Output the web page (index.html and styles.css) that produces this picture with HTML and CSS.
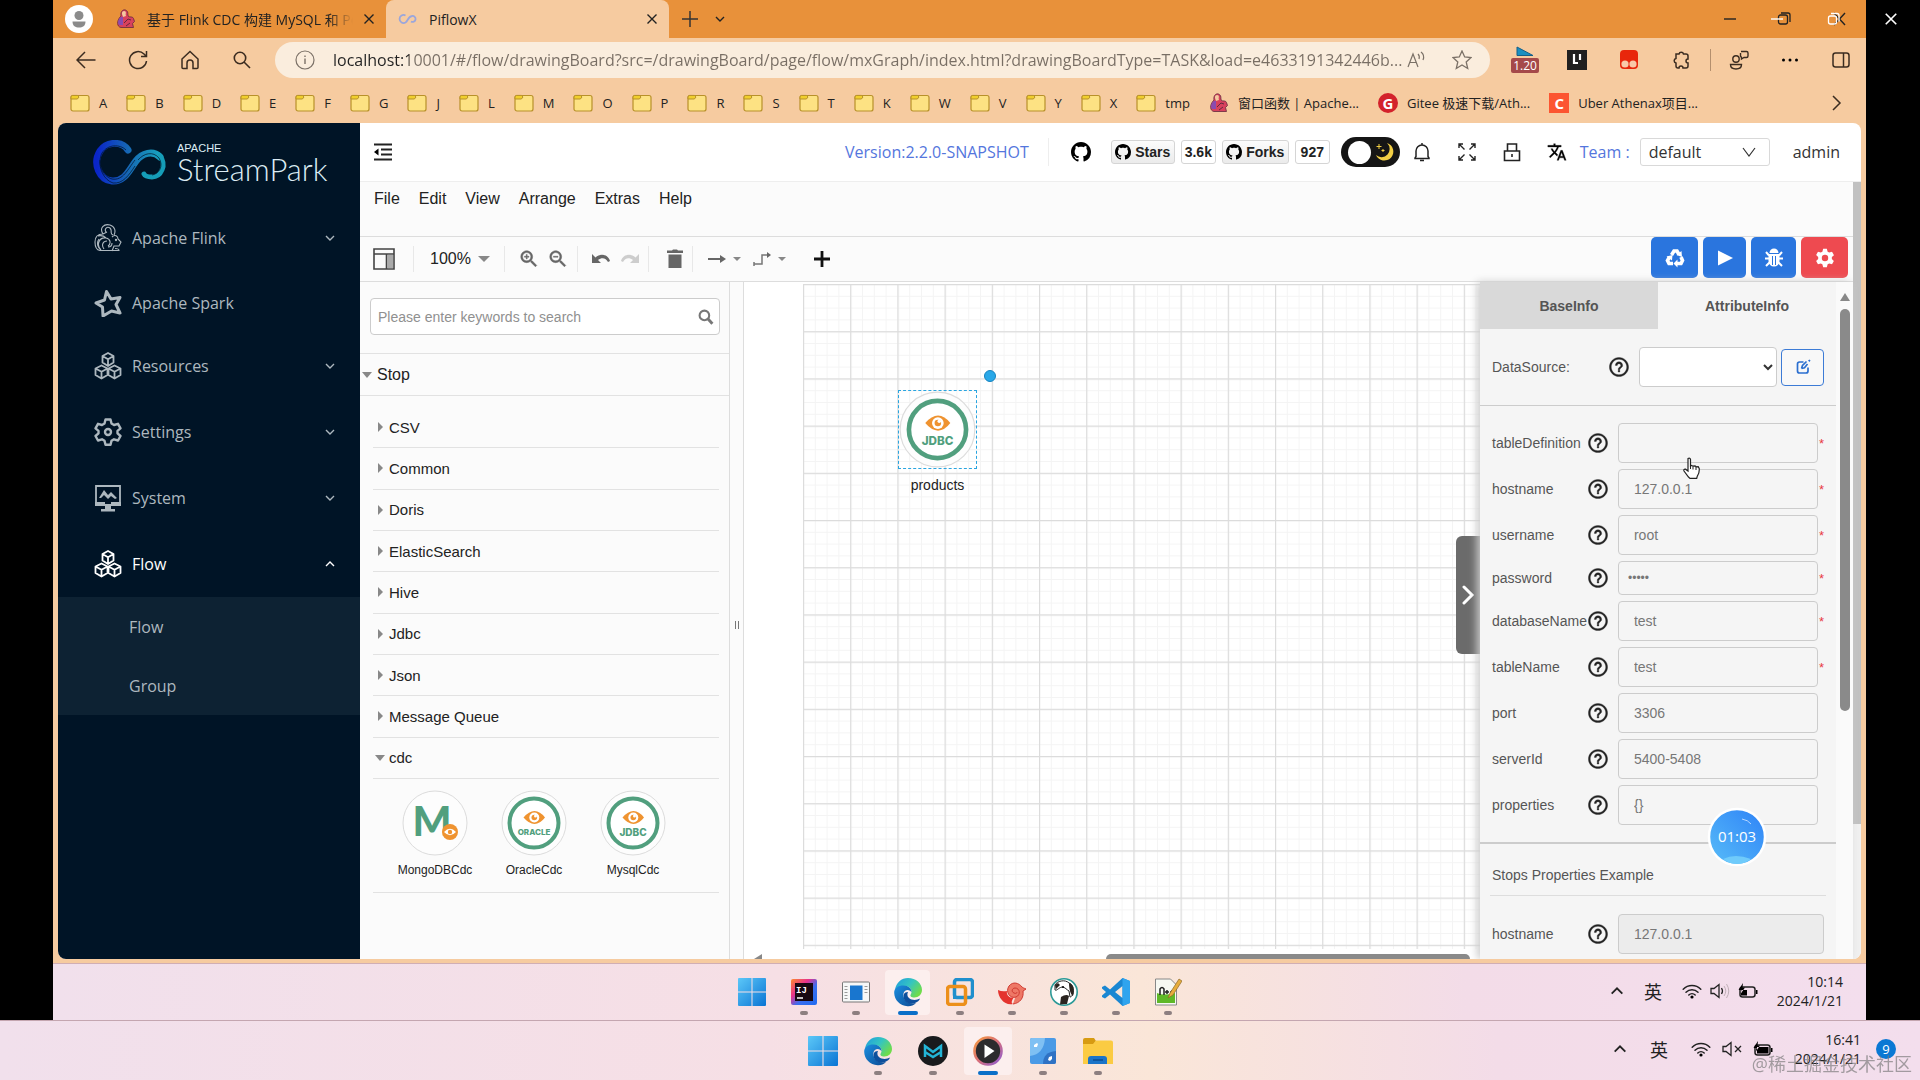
FILE: index.html
```html
<!DOCTYPE html>
<html lang="zh-CN">
<head>
<meta charset="utf-8">
<title>PiflowX</title>
<link rel="stylesheet" href="styles.css">
</head>
<body>
<svg class="defs" aria-hidden="true">
  <defs>
    <linearGradient id="gWin" x1="0" y1="0" x2="1" y2="1"><stop offset="0" stop-color="#5cc8f8"/><stop offset="1" stop-color="#0a74d4"/></linearGradient>
    <linearGradient id="gEdgeG" x1="0" y1="0" x2="1" y2="0.6"><stop offset="0" stop-color="#1e9be0"/><stop offset="0.55" stop-color="#35c5c0"/><stop offset="1" stop-color="#6fdc4a"/></linearGradient>
    <linearGradient id="gEdgeB" x1="0" y1="0" x2="1" y2="1"><stop offset="0" stop-color="#1b8fe0"/><stop offset="1" stop-color="#0b4a94"/></linearGradient>
    <linearGradient id="gLogo" x1="0" y1="0" x2="1" y2="0"><stop offset="0" stop-color="#0a25c8"/><stop offset="0.5" stop-color="#1668b4"/><stop offset="1" stop-color="#18a3bf"/></linearGradient>
    <linearGradient id="gIj" x1="0" y1="0" x2="1" y2="1"><stop offset="0" stop-color="#fe8b2e"/><stop offset="0.35" stop-color="#e8308c"/><stop offset="0.6" stop-color="#3b6ef0"/><stop offset="1" stop-color="#1f6cf0"/></linearGradient>
    <linearGradient id="gMedia" x1="0" y1="0" x2="1" y2="1"><stop offset="0" stop-color="#f79a3c"/><stop offset="0.5" stop-color="#d9707a"/><stop offset="1" stop-color="#8b5bd6"/></linearGradient>
    <pattern id="minor" width="11.8" height="11.8" patternUnits="userSpaceOnUse"><path d="M0 .5H12M.5 0V12" stroke="#f4f4f4" stroke-width="1" fill="none"/></pattern>
    <pattern id="major" width="47.2" height="47.2" patternUnits="userSpaceOnUse"><path d="M0 .6H48M.6 0V48" stroke="#dcdcdc" stroke-width="1.2" fill="none"/></pattern>
  </defs>
  <symbol id="folder" viewBox="0 0 20 18"><rect x="1" y="1.5" width="18" height="15.5" rx="2" fill="#fde283" stroke="#b8912a" stroke-width="1.2"/><path d="M1 5V3a1.6 1.6 0 0 1 1.6-1.6H7.5L9 3 7.4 5Z" fill="#f0cf2c" stroke="#b8912a"/></symbol>
  <symbol id="squirrel" viewBox="0 0 20 20"><path d="M5 7C4 2 8-.5 10.5 1.600 13 3.500 11 5.500 12.500 7.500 14 8.500 16.500 7 17.500 9.500l1 3-2 2 1 4H5C1 18 0 12 5 7Z" fill="#d8415d" stroke="#63283e" stroke-width=".8"/><path d="M6 5C5.500 2.500 8 1 9.500 2.500c1 1.500-.5 2.500.5 4.500L7 8Z" fill="#f4c9a0"/><path d="M3 10c1-2 3-2.500 4-2v8H3C1.500 14 2 12 3 10Z" fill="#8a4bb0"/><path d="m8 14 4-4 3 1M10 17l4-3" stroke="#63283e" fill="none"/></symbol>
  <symbol id="github" viewBox="0 0 16 16"><path d="M8 0C3.58 0 0 3.58 0 8c0 3.540 2.290 6.530 5.470 7.590.4.070.55-.17.55-.38 0-.19-.01-.82-.01-1.490-2.010.37-2.530-.49-2.690-.94-.09-.23-.48-.94-.82-1.130-.28-.15-.68-.52-.01-.53.63-.01 1.080.58 1.230.82.72 1.210 1.870.87 2.330.66.070-.52.28-.87.51-1.070-1.780-.2-3.640-.89-3.640-3.950 0-.87.31-1.590.82-2.150-.08-.2-.36-1.020.080-2.120 0 0 .67-.21 2.200.82.64-.18 1.320-.27 2-.27.68 0 1.360.090 2 .27 1.530-1.040 2.200-.82 2.200-.82.44 1.100.16 1.920.080 2.120.51.56.82 1.270.82 2.150 0 3.070-1.870 3.750-3.650 3.950.29.25.54.73.54 1.480 0 1.070-.01 1.930-.01 2.200 0 .21.15.46.55.38A8.013 8.013 0 0 0 16 8c0-4.420-3.580-8-8-8z"/></symbol>
  <symbol id="help" viewBox="0 0 24 24"><path d="M11 18h2v-2h-2v2zm1-17.500C5.700.5.500 5.700.5 12S5.700 23.500 12 23.500 23.500 18.300 23.500 12 18.300.5 12 .5zm0 20.800c-5.100 0-9.300-4.200-9.300-9.300S6.900 2.700 12 2.700s9.300 4.200 9.300 9.300-4.200 9.300-9.300 9.300zm0-15.600c-2.430 0-4.400 1.970-4.400 4.400h2.300c0-1.160.94-2.100 2.100-2.100s2.100.94 2.100 2.100c0 2-3.200 1.750-3.200 5.200h2.200c0-2.250 3.300-2.600 3.300-5.200 0-2.430-1.970-4.400-4.400-4.400z" stroke="currentColor" stroke-width=".4"/></symbol>
  <symbol id="down" viewBox="0 0 12 12"><path d="m2 4 4 4 4-4" fill="none" stroke="currentColor" stroke-width="1.400"/></symbol>
  <symbol id="up" viewBox="0 0 12 12"><path d="m2 8 4-4 4 4" fill="none" stroke="currentColor" stroke-width="1.400"/></symbol>
  <symbol id="close" viewBox="0 0 12 12"><path d="m1.500 1.500 9 9m0-9-9 9" fill="none" stroke="currentColor" stroke-width="1.400"/></symbol>
  <symbol id="cubes" viewBox="0 0 28 28"><g fill="none" stroke="currentColor" stroke-width="1.800" stroke-linejoin="round"><path d="m14 1 5.500 3v6.500L14 14l-5.500-3.500V4ZM8.500 4 14 7.300 19.500 4M14 7.300V14"/><path d="m7.500 13.500 6 3v6.500L7.500 26.500 1.500 23v-6.500Zm-6 3 6 3.300 6-3.300m-6 3.300v6.500M20.500 13.500l6 3v6.500l-6 3.500-6-3.500v-6.500Zm-6 3 6 3.300 6-3.300m-6 3.300v6.500"/></g></symbol>
  <symbol id="edge" viewBox="0 0 30 30"><path d="M2 13C3 5.500 8.500 1 15 1c8 0 14 5.500 14 12 0 4.500-3.500 7.500-7.500 7.500-3.500 0-5-1.500-3.500-3.500 2-3-1-8-6-8-5 0-9 2-10 4Z" fill="url(#gEdgeG)"/><path d="M1.200 16C1 11 5 8.500 10.500 8.500c5 0 8.500 3.500 8 7-.5-1.500-2-2.500-4-2.500-3.500 0-5 4-3.500 8 1.500 4 6 6.500 12 5-2.500 2.500-5.500 3.500-8.500 3.200C7 28.800 1.400 23 1.200 16Z" fill="url(#gEdgeB)"/><path d="M11 17c-2 5 3 12 11 9 3-1 4.500-3 5-4.500-3 1.800-8 2.200-11-.5-2-1.700-2-4-1-6-2 0-3.500.8-4 2Z" fill="#0d4f9c"/></symbol>
  <symbol id="windows" viewBox="0 0 28 28"><path d="M1 0h12.500v13.500H0V1a1 1 0 0 1 1-1Zm13.500 0H27a1 1 0 0 1 1 1v12.500H14.500ZM0 14.500h13.500V28H1a1 1 0 0 1-1-1Zm14.500 0H28V27a1 1 0 0 1-1 1H14.500Z" fill="url(#gWin)"/></symbol>
  <symbol id="wifi" viewBox="0 0 20 16"><g fill="none" stroke="currentColor" stroke-width="1.500" stroke-linecap="round"><path d="M1.200 6.200a12.500 12.500 0 0 1 17.600 0M4 9.200a8.500 8.500 0 0 1 12 0M6.800 12a4.600 4.600 0 0 1 6.400 0"/></g><circle cx="10" cy="14" r="1.600"/></symbol>
  <symbol id="battery" viewBox="0 0 20 16"><rect x="2" y="4" width="15" height="10" rx="2.500" fill="none" stroke="currentColor" stroke-width="1.500"/><path d="M18 7v4h1.500V7ZM3 7h6v5.500H3ZM5 0 .5 7H3.500L2.500 11 7 4.500H4.500Z"/></symbol>
  <symbol id="battfull" viewBox="0 0 20 16"><rect x="2" y="4" width="15" height="10" rx="2.500" fill="none" stroke="currentColor" stroke-width="1.500"/><path d="M18 7v4h1.500V7ZM4 6h11.500v6.500H4ZM5 0 .5 7H3.500L2.500 11 7 4.500H4.500Z"/></symbol>
  <symbol id="jdbc" viewBox="0 0 66 66"><circle cx="33" cy="33" r="32" fill="#fdfdfd" stroke="#dcdcdc"/><circle cx="33" cy="33" r="24.500" fill="#fff" stroke="#519f7e" stroke-width="4"/><path d="M22.500 27.500Q28 21 33.500 21T44 27.500Q39 34 33.500 34T22.500 27.500Z" fill="#ef9330"/><circle cx="33.300" cy="27.500" r="5" fill="#fff"/><circle cx="33.300" cy="27.500" r="2.800" fill="#ef9330"/><circle cx="34.500" cy="26" r="1.500" fill="#fff"/><text x="33" y="46" text-anchor="middle" class="badge-text">JDBC</text></symbol>
</svg>

<div class="screen">
  <div class="desktop">
    <div class="browser">
      <div class="tabstrip">
        <svg class="avatar" viewBox="0 0 28 28"><circle cx="14" cy="14" r="14" fill="#fff"/><circle cx="14" cy="10.500" r="4.500" fill="#8b8b8b"/><path d="M7.500 16.500h13c0 4.500-3 6-6.500 6s-6.500-1.500-6.500-6Z" fill="#8b8b8b"/></svg>
        <div class="tab"><svg class="i20"><use href="#squirrel"/></svg><span class="tab-title fade">基于 Flink CDC 构建 MySQL 和 Po</span><button aria-label="Close tab"><svg class="i12"><use href="#close"/></svg></button></div>
        <div class="tab active"><svg class="i20" viewBox="0 0 20 20"><path d="M7.500 6.500a4 4 0 1 0 0 7C10 12 10 7.500 14 7a3 3 0 1 1-1 5.500" fill="none" stroke="#9aa6dc" stroke-width="1.800"/></svg><span class="tab-title">PiflowX</span><button aria-label="Close tab"><svg class="i12"><use href="#close"/></svg></button></div>
        <button class="strip-btn" aria-label="New tab"><svg class="i16" viewBox="0 0 16 16"><path d="M8 0v16M0 8h16" stroke="#333" stroke-width="1.500"/></svg></button>
        <button class="strip-btn" aria-label="Tab list"><svg class="i12"><use href="#down"/></svg></button>
        <div class="wincontrols">
          <svg class="win-icon" viewBox="0 0 24 20"><path d="M6 10h12" stroke="#222" stroke-width="1.400"/></svg>
          <svg class="win-icon" viewBox="0 0 24 20"><rect x="7.500" y="6" width="9" height="9" rx="2" fill="none" stroke="#222" stroke-width="1.300"/><path d="M10 4h7a2 2 0 0 1 2 2v7" fill="none" stroke="#222" stroke-width="1.300"/><path d="M0 10h12" stroke="#fff" stroke-width="1.400"/></svg>
          <svg class="win-icon" viewBox="0 0 24 20"><path d="m10 4 11 12m0-12L10 16" stroke="#222" stroke-width="1.400"/><rect x="4.500" y="7" width="8" height="8" rx="2" fill="none" stroke="#fff" stroke-width="1.300"/><path d="M7 4.500h6a2 2 0 0 1 2 2v6" fill="none" stroke="#fff" stroke-width="1.300"/></svg>
        </div>
      </div>

      <div class="toolbar">
        <button class="nav" aria-label="Back"><svg class="i20" viewBox="0 0 20 20"><path d="M19.500 10H1.500M9 2 1 10l8 8" fill="none" stroke="#3b2c20" stroke-width="1.500"/></svg></button>
        <button class="nav" aria-label="Refresh"><svg class="i20" viewBox="0 0 20 20"><path d="M18.500 11a8.500 8.500 0 1 1-2.500-7l2 2M18.500 1v5.500H13" fill="none" stroke="#3b2c20" stroke-width="1.500"/></svg></button>
        <button class="nav" aria-label="Home"><svg class="i20" viewBox="0 0 20 20"><path d="M2 9 10 1.500 18 9v8.500a1 1 0 0 1-1 1h-4V13a3 3 0 0 0-6 0v5.500H3a1 1 0 0 1-1-1Z" fill="none" stroke="#3b2c20" stroke-width="1.500"/></svg></button>
        <button class="nav" aria-label="Search"><svg class="i20" viewBox="0 0 20 20"><circle cx="8" cy="8" r="5.700" fill="none" stroke="#3b2c20" stroke-width="1.600"/><path d="m12 12 6 6" stroke="#3b2c20" stroke-width="1.600"/></svg></button>
        <div class="address">
          <svg class="i20" viewBox="0 0 20 20"><circle cx="10" cy="10" r="9" fill="none" stroke="#7b7167" stroke-width="1.200"/><path d="M10 8.500V14M10 5.500V7" stroke="#7b7167" stroke-width="1.400"/></svg>
          <input aria-label="Address" value="localhost:10001/#/flow/drawingBoard?src=/drawingBoard/page/flow/mxGraph/index.html?drawingBoardType=TASK&amp;load=e4633191342446b...">
          <svg class="i20" viewBox="0 0 20 20"><path d="M2 17 7 4l5 13M4 12.500h6M12 4q2 2 1 5M15 2q4 3 2 8" fill="none" stroke="#7b7167" stroke-width="1.200"/></svg>
          <svg class="i20 star" viewBox="0 0 20 20"><path d="m10 1 2.700 6 6.300.6-4.800 4.300 1.500 6.600L10 15l-5.700 3.500 1.500-6.600L1 7.600 7.300 7Z" fill="none" stroke="#7b7167" stroke-width="1.300"/></svg>
        </div>
        <button class="nav" aria-label="Player speed"><svg class="i28" viewBox="0 0 28 28"><path d="M6 1 22 9.500H6Z" fill="#1b8fc0" stroke="#155f88"/><rect y="12" width="28" height="15" rx="2" fill="#a5494a"/><text x="14" y="24" text-anchor="middle" class="speed">1.20</text></svg></button>
        <button class="nav" aria-label="Reader"><svg class="i20" viewBox="0 0 20 20"><path d="M0 0h20v20H0Z" fill="#202020"/><path d="M7 4v9h4M13 4v6" stroke="#fff" stroke-width="2.200" fill="none"/></svg></button>
        <button class="nav" aria-label="Tampermonkey"><svg class="i20" viewBox="0 0 20 20"><rect x="1" y="0" width="18" height="19" rx="4" fill="#e8270c"/><circle cx="6" cy="14" r="3.600" fill="#f9c8a8"/><circle cx="14" cy="14" r="3.600" fill="#f9c8a8"/></svg></button>
        <button class="nav" aria-label="Extensions"><svg class="i20" viewBox="0 0 20 20"><path d="M5 4h3a2.300 2.300 0 0 1 4.500 0H15a2 2 0 0 1 2 2v3a2 2 0 0 0 0 4v3a2 2 0 0 1-2 2h-3a2 2 0 0 0-4 0H7a2 2 0 0 1-2-2v-3a2.300 2.300 0 0 1 0-4.500Z" fill="none" stroke="#3b2c20" stroke-width="1.500"/></svg></button>
        <span class="vline"></span>
        <button class="nav" aria-label="Share"><svg class="i20" viewBox="0 0 20 20"><circle cx="7" cy="9" r="3.200" fill="none" stroke="#3b2c20" stroke-width="1.400"/><path d="M1.500 14.500h11c0 3-2 4.500-5.500 4.500s-5.500-1.500-5.500-4.500ZM12 1.500h5.500a1.500 1.500 0 0 1 1.500 1.500v3A1.500 1.500 0 0 1 17.500 7.500H15L12.500 9V7.500L11.500 6V3" fill="none" stroke="#3b2c20" stroke-width="1.400"/></svg></button>
        <button class="nav" aria-label="More"><svg class="i20" viewBox="0 0 20 20"><circle cx="3.500" cy="10" r="1.500"/><circle cx="10" cy="10" r="1.500"/><circle cx="16.500" cy="10" r="1.500"/></svg></button>
        <button class="nav" aria-label="Sidebar"><svg class="i20" viewBox="0 0 20 20"><rect x="2" y="3" width="16" height="14" rx="2.500" fill="none" stroke="#3b2c20" stroke-width="1.500"/><path d="M12.500 3v14" stroke="#3b2c20" stroke-width="1.500"/></svg></button>
      </div>

      <nav class="bookmarks">
        <a href="#"><svg class="i20"><use href="#folder"/></svg>A</a><a href="#"><svg class="i20"><use href="#folder"/></svg>B</a><a href="#"><svg class="i20"><use href="#folder"/></svg>D</a><a href="#"><svg class="i20"><use href="#folder"/></svg>E</a><a href="#"><svg class="i20"><use href="#folder"/></svg>F</a><a href="#"><svg class="i20"><use href="#folder"/></svg>G</a><a href="#"><svg class="i20"><use href="#folder"/></svg>J</a><a href="#"><svg class="i20"><use href="#folder"/></svg>L</a><a href="#"><svg class="i20"><use href="#folder"/></svg>M</a><a href="#"><svg class="i20"><use href="#folder"/></svg>O</a><a href="#"><svg class="i20"><use href="#folder"/></svg>P</a><a href="#"><svg class="i20"><use href="#folder"/></svg>R</a><a href="#"><svg class="i20"><use href="#folder"/></svg>S</a><a href="#"><svg class="i20"><use href="#folder"/></svg>T</a><a href="#"><svg class="i20"><use href="#folder"/></svg>K</a><a href="#"><svg class="i20"><use href="#folder"/></svg>W</a><a href="#"><svg class="i20"><use href="#folder"/></svg>V</a><a href="#"><svg class="i20"><use href="#folder"/></svg>Y</a><a href="#"><svg class="i20"><use href="#folder"/></svg>X</a><a href="#"><svg class="i20"><use href="#folder"/></svg>tmp</a>
        <a href="#"><svg class="i20"><use href="#squirrel"/></svg>窗口函数 | Apache...</a>
        <a href="#"><span class="fav gitee">G</span>Gitee 极速下载/Ath...</a>
        <a href="#"><span class="fav csdn">C</span>Uber Athenax项目...</a>
        <button aria-label="More bookmarks"><svg class="i16" viewBox="0 0 16 16"><path d="m5 1 7 7-7 7" fill="none" stroke="#3b2c20" stroke-width="1.500"/></svg></button>
      </nav>

      <div class="app">
        <aside class="sidebar">
          <div class="logo">
            <svg class="logo-mark" viewBox="0 0 76 46"><g fill="none" stroke="url(#gLogo)" stroke-linecap="round"><path d="M36 10C30 1 15 1 8 11 0 24 8 40 20 41c13 1 17-11 24-20 6-8 17-11 24-4" stroke-width="7"/><path d="M68 16c7 9 1 21-8 21-4 0-7-1-8-3" stroke-width="5" stroke="#159db8"/></g><g fill="none" stroke="#001426" stroke-width=".7"><path d="M34 10C28 4 16 4 10 13 5 23 10 36 20 39c11 2 16-10 23-19M46 20c6-7 15-9 21-2 5 8 0 16-7 17M8 20c-1 9 4 20 13 23 10 1 16-8 22-17"/></g></svg>
            <div><span class="logo-top">APACHE</span><span class="logo-name">StreamPark</span></div>
          </div>
          <ul class="menu">
            <li><a href="#"><svg class="i28" viewBox="0 0 28 28"><g fill="none" stroke="currentColor" stroke-width="1.100"><path d="M9 10C5 4 10-.5 16 1c5 1.500 6 6 4 10M12 8c-2-3 1-6 4-4 3 3-1 5 3 7M1 18c0-5 3-8 8-8l4-2M1 18c0 5 2 8 5 8.500h19c0-2-3-2-4-2M7 26c-5-5-2-13 5-12 5 1 5 6 2 8M10 25c-3-4-1-8 3-8M18 13c3-3 6-1 6 2l3 3-2 4h-5l-2 5M4 12c4-1 6 0 8 2M5 15c-3 4-1 9 2 11M14 23c3 0 4-2 4-4"/><circle cx="22" cy="16" r=".6"/></g></svg>Apache Flink<svg class="i12 chev"><use href="#down"/></svg></a></li>
            <li><a href="#"><svg class="i28" viewBox="0 0 28 28"><path class="hollow" d="M12.500 2.500 17 10l9-1.500-4 7 4 8.500-8.500-2L9 27l-.5-9L2 14l8.500-3Z" fill="none" stroke="currentColor" stroke-width="3" stroke-linejoin="round"/></svg>Apache Spark</a></li>
            <li><a href="#"><svg class="i28"><use href="#cubes"/></svg>Resources<svg class="i12 chev"><use href="#down"/></svg></a></li>
            <li><a href="#"><svg class="i28" viewBox="0 0 28 28"><path d="M11.500 1.500h5l1 4 2.500 1.500 4-1.200 2.500 4.500-3 2.500v2.500l3 2.700-2.500 4.500-4-1.200-2.500 1.500-1 4h-5l-1-4L8 21.300l-4 1.200L1.500 18l3-2.700v-2.500l-3-2.500L4 5.800 8 7l2.500-1.500Z" fill="none" stroke="currentColor" stroke-width="2.400" stroke-linejoin="round"/><circle cx="14" cy="14" r="3" fill="none" stroke="currentColor" stroke-width="2.400"/></svg>Settings<svg class="i12 chev"><use href="#down"/></svg></a></li>
            <li><a href="#"><svg class="i28" viewBox="0 0 28 28"><path d="M2 19V2h24v17" fill="none" stroke="currentColor" stroke-width="1.800"/><path d="m5 14 5-8 4 5 3-3 6 6-2 1-4-3-3 3-4-4-3 3Z"/><path d="M1 18h10v2h6v-2h10v4H17v3h4v2.500H7V25h4v-3H1Z"/></svg>System<svg class="i12 chev"><use href="#down"/></svg></a></li>
            <li class="open"><a href="#"><svg class="i28"><use href="#cubes"/></svg>Flow<svg class="i12 chev"><use href="#up"/></svg></a></li>
          </ul>
          <ul class="submenu"><li><a href="#">Flow</a></li><li><a href="#">Group</a></li></ul>
        </aside>

        <main class="main">
          <header class="header">
            <button aria-label="Fold menu"><svg class="i18" viewBox="0 0 18 18"><path d="M0 1.500h18M7 6.500h11M7 11.500h11M0 16.500h18" stroke="#222" stroke-width="1.800"/><path d="M4.500 5.500v7L0 9Z"/></svg></button>
            <div class="header-right">
              <span class="version">Version:2.2.0-SNAPSHOT</span>
              <svg class="i20 gh"><use href="#github"/></svg>
              <a href="#" class="gh-btn w64"><svg class="i16"><use href="#github"/></svg>Stars</a><a href="#" class="gh-count">3.6k</a>
              <a href="#" class="gh-btn w67"><svg class="i16"><use href="#github"/></svg>Forks</a><a href="#" class="gh-count">927</a>
              <button class="toggle" aria-label="Dark mode"><span class="knob"></span><svg class="i20" viewBox="0 0 20 20"><path d="M12 1a9 9 0 1 1-11 12 8 8 0 0 0 11-12Z" fill="#f2cf45"/><path d="M4 2v5M1.500 4.500h5M8 7v3M6.500 8.500h3" stroke="#f2cf45"/></svg></button>
              <button class="cell" aria-label="Notifications"><svg class="i20" viewBox="0 0 20 20"><path d="M3 16.500V16l1-1.500V9a6 6 0 0 1 12 0v5.500l1 1.500v.5ZM8 18.500h4M10 1v2" fill="none" stroke="#222" stroke-width="1.500"/></svg></button>
              <button class="cell" aria-label="Fullscreen"><svg class="i18" viewBox="0 0 18 18"><path d="M6.500 6.500 1 1m0 4V1h4M11.500 6.500 17 1m-4 0h4v4M6.500 11.500 1 17m0-4v4h4M11.500 11.500 17 17m0-4v4h-4" fill="none" stroke="#222" stroke-width="1.400"/></svg></button>
              <button class="cell" aria-label="Lock"><svg class="i20" viewBox="0 0 20 20"><path d="M2.500 9h15v9.500h-15ZM5.500 9V2h9v7M10 12v3" fill="none" stroke="#222" stroke-width="1.600"/></svg></button>
              <button class="cell" aria-label="Language"><svg class="i20" viewBox="0 0 24 24"><path d="M12.870 15.070l-2.540-2.510.03-.03c1.740-1.940 2.980-4.170 3.710-6.530H17V4h-7V2H8v2H1v1.990h11.170C11.500 7.920 10.440 9.750 9 11.350 8.070 10.320 7.300 9.190 6.690 8h-2c.73 1.630 1.730 3.170 2.980 4.560l-5.090 5.020L4 19l5-5 3.110 3.110.76-2.040zM18.500 10h-2L12 22h2l1.120-3h4.750L21 22h2l-4.500-12zm-2.620 7l1.620-4.330L19.120 17h-3.240z" stroke="#222" stroke-width=".4"/></svg></button>
              <label class="team" for="team">Team :</label>
              <span class="team-box"><select id="team"><option>default</option></select><svg class="i16" viewBox="0 0 16 16"><path d="m2 4 6 8 6-8" fill="none" stroke="#333" stroke-width="1.200"/></svg></span>
              <span class="user">admin</span>
            </div>
          </header>

          <div class="content">
            <div class="editor">
              <nav class="menubar"><a href="#">File</a><a href="#">Edit</a><a href="#">View</a><a href="#">Arrange</a><a href="#">Extras</a><a href="#">Help</a></nav>
              <div class="tools">
                <div class="tool-group first"><svg class="i22" viewBox="0 0 22 22"><path d="M1 1h20v20H1ZM1 6h20M13.500 6v15" fill="none" stroke="#444" stroke-width="1.600"/><path d="M14 7h6v13h-6Z" fill="#aaa"/></svg></div>
                <div class="tool-group zoomlevel">100%<i class="caret"></i></div>
                <div class="tool-group g73"><svg class="i22" viewBox="0 0 24 24"><path d="M15.500 14h-.79l-.28-.27C15.410 12.590 16 11.110 16 9.500 16 5.910 13.090 3 9.500 3S3 5.910 3 9.500 5.910 16 9.500 16c1.610 0 3.090-.59 4.230-1.570l.27.28v.79l5 4.990L20.490 19l-4.990-5zm-6 0C7.010 14 5 11.990 5 9.500S7.010 5 9.500 5 14 7.010 14 9.500 11.990 14 9.500 14zM12 10h-2v2H9v-2H7V9h2V7h1v2h2v1z" stroke="#666" stroke-width=".5"/></svg><svg class="i22" viewBox="0 0 24 24"><path d="M15.500 14h-.79l-.28-.27C15.410 12.590 16 11.110 16 9.500 16 5.910 13.090 3 9.500 3S3 5.910 3 9.500 5.910 16 9.500 16c1.610 0 3.090-.59 4.230-1.570l.27.28v.79l5 4.990L20.490 19l-4.990-5zm-6 0C7.010 14 5 11.990 5 9.500S7.010 5 9.500 5 14 7.010 14 9.500 11.990 14 9.500 14zM12 10H7V9h5v1z" stroke="#666" stroke-width=".5"/></svg></div>
                <div class="tool-group g71"><svg class="i20" viewBox="0 0 20 20"><path d="M1 5v9h9L7 11c4-3 8-2 10 2l2-1C17 5 9 4 4.500 8.500Z"/></svg><svg class="i20 dim" viewBox="0 0 20 20"><path d="M19 5v9h-9l3-3c-4-3-8-2-10 2l-2-1C3 5 11 4 15.500 8.500Z"/></svg></div>
                <div class="tool-group trash"><svg class="i20" viewBox="0 0 20 20"><path d="M2 1.500h5L8 .5h4l1 1h5V4H2ZM3.500 5.500h13V19h-13Z"/></svg></div>
                <div class="tool-group edges"><svg class="i20" viewBox="0 0 20 20"><path d="M1 9h13v2H1ZM13 6l6 4-6 4Z"/></svg><i class="caret small"></i><svg class="i20" viewBox="0 0 20 20"><path d="M2 15h8V6h7M2 13v4" fill="none" stroke="#777" stroke-width="1.500"/><path d="m15 3 4 3-4 3Z"/></svg><i class="caret small"></i></div>
                <svg class="i16" viewBox="0 0 16 16"><path d="M8 0v16M0 8h16" stroke="#111" stroke-width="2.800"/></svg>
                <div class="run-actions">
                  <button aria-label="Clear"><svg class="i20" viewBox="0 0 20 20"><g fill="none" stroke="#fff" stroke-width="3.600"><path d="M6.500 7 9 3h3l2 3.500M16 9l1.500 3.500-1.500 3h-4.500M8 15.500H4L2.500 12.500 4.500 9"/></g><path d="m16.500 3 .5 6-5.500-2ZM12.500 11.500v8L8.500 15.500ZM1.500 8.500l6-1.500L7 12.500Z" fill="#fff"/></svg></button>
                  <button class="play" aria-label="Run"><svg class="i20" viewBox="0 0 20 20"><path d="M3 2.500 18 10 3 17.500Z" fill="#fff"/></svg></button>
                  <button class="bug" aria-label="Debug"><svg class="i20" viewBox="0 0 20 20"><path d="M5.500 5a4.500 4.500 0 0 1 9 0ZM4.500 6h11v7a5.500 5.500 0 0 1-11 0Z" fill="#fff"/><path d="M1 10.500h4m10 0h4M2 4l3 3.500M18 4l-3 3.500M2 18l3.500-3.500M18 18l-3.500-3.500" stroke="#fff" stroke-width="2"/><path d="M8.500 8v9M11.500 8v9" stroke="#2a75de" stroke-width="1"/></svg></button>
                  <button class="danger" aria-label="Settings"><svg class="i22" viewBox="0 0 24 24"><path d="M12,15.500A3.500,3.500 0 0,1 8.500,12A3.500,3.500 0 0,1 12,8.500A3.500,3.500 0 0,1 15.500,12A3.500,3.500 0 0,1 12,15.500M19.430,12.970C19.470,12.650 19.500,12.330 19.500,12C19.500,11.670 19.470,11.340 19.430,11L21.540,9.370L21.660,8.730L19.660,5.270L16.560,6.050L14.870,5.070L14,2H10L9.130,5.070L7.440,6.050L4.340,5.270L2.340,8.730L4.570,11V12.970L2.340,15.270L4.340,18.730L7.440,17.940L9.130,18.930L10,22H14L14.870,18.930L16.560,17.940L19.660,18.730L21.660,15.270L19.430,12.970Z" fill="#fff"/></svg></button>
                </div>
              </div>

              <div class="work">
                <section class="palette">
                  <div class="search"><input type="text" aria-label="Search" placeholder="Please enter keywords to search"><svg class="i16" viewBox="0 0 20 20"><circle cx="8" cy="8" r="6" fill="none" stroke="#777" stroke-width="2.600"/><path d="m12 12 6 6.500" stroke="#777" stroke-width="3.600"/></svg></div>
                  <div class="group-head"><i class="caret tri"></i>Stop</div>
                  <ul class="groups">
                    <li><i class="tri-right"></i>CSV</li><li><i class="tri-right"></i>Common</li><li><i class="tri-right"></i>Doris</li><li><i class="tri-right"></i>ElasticSearch</li><li><i class="tri-right"></i>Hive</li><li><i class="tri-right"></i>Jdbc</li><li><i class="tri-right"></i>Json</li><li><i class="tri-right"></i>Message Queue</li><li><i class="caret tri"></i>cdc</li>
                  </ul>
                  <div class="shapes">
                    <figure><svg class="i66" viewBox="0 0 66 66"><circle cx="33" cy="33" r="32" fill="#fdfdfd" stroke="#dcdcdc"/><text x="30" y="46" text-anchor="middle" class="mongo">M</text><circle cx="48" cy="42" r="8" fill="#ef9330"/><path d="M42 42q6-6.500 12 0-6 6.500-12 0Z" fill="#fff"/><circle cx="48" cy="42" r="2.200" fill="#ef9330"/></svg><figcaption>MongoDBCdc</figcaption></figure>
                    <figure><svg class="i66" viewBox="0 0 66 66"><circle cx="33" cy="33" r="32" fill="#fdfdfd" stroke="#dcdcdc"/><circle cx="33" cy="33" r="24.500" fill="#fff" stroke="#519f7e" stroke-width="4"/><path d="M22.500 27.500Q28 21 33.500 21T44 27.500Q39 34 33.500 34T22.500 27.500Z" fill="#ef9330"/><circle cx="33.300" cy="27.500" r="5" fill="#fff"/><circle cx="33.300" cy="27.500" r="2.800" fill="#ef9330"/><circle cx="34.500" cy="26" r="1.500" fill="#fff"/><text x="33" y="45" text-anchor="middle" class="badge-text sm">ORACLE</text></svg><figcaption>OracleCdc</figcaption></figure>
                    <figure><svg class="i66"><use href="#jdbc"/></svg><figcaption>MysqlCdc</figcaption></figure>
                  </div>
                </section>
                <div class="splitter"><i></i></div>
                <section class="canvas">
                  <svg class="grid"><rect width="100%" height="100%" fill="url(#minor)"/><rect width="100%" height="100%" fill="url(#major)"/></svg>
                  <div class="node"><svg><use href="#jdbc"/></svg><span>products</span></div>
                  <i class="dot"></i>
                  <div class="hscroll"><i class="hs-arrow"></i><i class="hs-thumb"></i></div>
                  <button class="collapse" aria-label="Collapse panel"><svg class="i20" viewBox="0 0 20 20"><path d="m6 2 8 8-8 8" fill="none" stroke="#fff" stroke-width="3" stroke-linecap="round"/></svg></button>
                </section>
                <section class="props">
                  <div class="props-body">
                    <div class="props-tabs"><button class="inactive">BaseInfo</button><button>AttributeInfo</button></div>
                    <div class="datasource"><label for="ds">DataSource:</label><svg class="i20"><use href="#help"/></svg><select id="ds"><option></option></select><button aria-label="Edit data source"><svg class="i16" viewBox="0 0 16 16"><path d="M8.500 3H4.500a2 2 0 0 0-2 2v7a2 2 0 0 0 2 2H11a2 2 0 0 0 2-2V8.500M6.500 9.500l1-3 4-4M6.500 9.500l3-.8L12.500 5" fill="none" stroke="#2b6fd0" stroke-width="1.700"/><path d="m13 1.500 1.500-1 1 1-1 1.500Z" fill="#2b6fd0"/></svg></button></div>
                    <form class="fields">
                      <div class="field req"><label for="f1">tableDefinition</label><svg class="i20"><use href="#help"/></svg><input id="f1"></div>
                      <div class="field req"><label for="f2">hostname</label><svg class="i20"><use href="#help"/></svg><input id="f2" value="127.0.0.1"></div>
                      <div class="field req"><label for="f3">username</label><svg class="i20"><use href="#help"/></svg><input id="f3" value="root"></div>
                      <div class="field req"><label for="f4">password</label><svg class="i20"><use href="#help"/></svg><input id="f4" type="password" value="12345"></div>
                      <div class="field req"><label for="f5">databaseName</label><svg class="i20"><use href="#help"/></svg><input id="f5" value="test"></div>
                      <div class="field req"><label for="f6">tableName</label><svg class="i20"><use href="#help"/></svg><input id="f6" value="test"></div>
                      <div class="field"><label for="f7">port</label><svg class="i20"><use href="#help"/></svg><input id="f7" value="3306"></div>
                      <div class="field"><label for="f8">serverId</label><svg class="i20"><use href="#help"/></svg><input id="f8" value="5400-5408"></div>
                      <div class="field"><label for="f9">properties</label><svg class="i20"><use href="#help"/></svg><input id="f9" value="{}"></div>
                    </form>
                    <h2 class="example">Stops Properties Example</h2>
                    <div class="field sample"><label for="f10">hostname</label><svg class="i20"><use href="#help"/></svg><input id="f10" value="127.0.0.1" readonly></div>
                  </div>
                  <div class="pscroll"><i class="ps-arrow"></i><i class="ps-thumb"></i></div>
                </section>
              </div>
            </div>
            <div class="outer-scroll"><i></i></div>
          </div>
        </main>
      </div>
    </div>

    <div class="taskbar inner">
      <div class="apps">
        <button aria-label="Start"><svg class="i28"><use href="#windows"/></svg></button>
        <button class="running" aria-label="IntelliJ IDEA"><svg class="i26" viewBox="0 0 26 26"><rect width="26" height="26" rx="2" fill="url(#gIj)"/><path d="M4 4h18v18H4Z" fill="#170812"/><text x="5" y="14" class="ij">IJ</text><path d="M6 19h6" stroke="#fff" stroke-width="1.500"/></svg></button>
        <button class="running" aria-label="Viewer"><svg class="i28" viewBox="0 0 28 28"><rect x=".5" y="4" width="27" height="20" rx="1" fill="#f7f7f7" stroke="#777"/><path d="M8 7.500h12.500V22H8Z" fill="#1976cf"/><path d="M4 8v14M24 8v7" stroke="#999" stroke-width="3" stroke-dasharray="1 2"/></svg></button>
        <button class="running current" aria-label="Edge"><svg class="i30"><use href="#edge"/></svg></button>
        <button class="running" aria-label="VMware"><svg class="i28" viewBox="0 0 28 28"><rect x="8.500" y="1.500" width="18" height="18" rx="2.500" fill="none" stroke="#1f8fcd" stroke-width="3.500"/><rect x="1.500" y="8.500" width="18" height="18" rx="2.500" fill="none" stroke="#ec8f1a" stroke-width="3.500"/><path d="M8.500 12v7.500H16" fill="none" stroke="#1f8fcd" stroke-width="3"/></svg></button>
        <button class="running" aria-label="Shell"><svg class="i28" viewBox="0 0 28 28"><path d="M0 12q4 2 9 1c-1 4 3 8 7 6q-4 6-1 7C7 28 0 20 0 12Z" fill="#e4342e"/><path d="M15 26c7-1 11-6 10-13l3-2c-2-1-3-1-4-2-3-4-9-6-13-1-4 6 1 13 7 11 5-2 4-9-1-9-3 0-4 4-1 5 2 1 3 0 3-1" fill="#ee7866" stroke="#cf3a31"/></svg></button>
        <button class="running" aria-label="DBeaver"><svg class="i28" viewBox="0 0 28 28"><circle cx="14" cy="14" r="13.200" fill="#fff" stroke="#2c9a97" stroke-width="1.600"/><path d="M5 7c2-4 10-6 14-2 4 1 5 6 4 11-1 2-2 3-3 3l-1-6c-2-1-4-4-7-4-4 1-5 4-7 3Z" fill="#fff" stroke="#222"/><path d="M19 5c4 1 6 6 4 13-2-1-4-6-4-13ZM11 19c3-2 6-3 8-1l-2 8-7 .5ZM5 7l3-2 2 2-4 4Z" fill="#2a2420"/><circle cx="13" cy="9" r="1"/></svg></button>
        <button class="running" aria-label="VS Code"><svg class="i28" viewBox="0 0 28 28"><path d="M20.500 0 28 3v22l-7.500 3L8 16.500l-5 4L0 19v-1.500L4 14 0 10.500V9l3-1.500 5 4Zm0 8L13 14l7.500 6Z" fill="#1a87d2"/><path d="M20.500 0 28 3v22l-7.500 3Z" fill="#2fa4ee"/></svg></button>
        <button class="running" aria-label="Notepad++"><svg class="i28" viewBox="0 0 28 28"><path d="M1.500 1h15l6 6v20h-21Z" fill="#f6f8f2" stroke="#888"/><path d="M3 15q6 3 18 0v10H3Z" fill="#5fb827"/><path d="M6 17V11q2-3 4 0v6M11 14h4M13 12v4M16 14h4M18 12v4" fill="none" stroke="#222" stroke-width="1.500"/><path d="m14 20 2-5L25 1l3 2-9 14Z" fill="#e7ad3d" stroke="#8d6a28" stroke-width=".7"/></svg></button>
      </div>
      <div class="tray"><svg class="i16 t-up"><use href="#up"/></svg><span class="ime">英</span><svg class="i20"><use href="#wifi"/></svg><svg class="i20" viewBox="0 0 20 16"><path d="M1 5.500h3L9 1.500v13L4 10.500H1Z" fill="none" stroke="#222" stroke-width="1.300"/><path d="M11.500 5q2 3 0 6" fill="none" stroke="#222" stroke-width="1.300"/><path d="M14 3q3.500 5 0 10M16.500 1q4.500 7 0 14" fill="none" stroke="#c0b0b8"/></svg><svg class="i20"><use href="#battery"/></svg><time>10:14<br>2024/1/21</time></div>
    </div>
    <svg class="timer" viewBox="0 0 60 60"><defs><linearGradient id="gt" x1="1" y1="0" x2="0" y2="1"><stop offset="0" stop-color="#2e82f7"/><stop offset="1" stop-color="#58bdf8"/></linearGradient></defs><circle cx="30" cy="30" r="28" fill="url(#gt)" stroke="#fff" stroke-width="2.500"/><path d="M35 12q6 1 9 5" stroke="#b9d8ff" fill="none"/><path d="M16 52q12-6 28 0-6 5-14 5T16 52Z" fill="#6fcbfb"/><text x="30" y="35" text-anchor="middle">01:03</text></svg>
    <svg class="cursor" viewBox="0 0 18 24"><path d="M5 1.500q2-1 2.500 1V9l1-.5 1.500.7 2-.4 1.200 1 2-.2 1 1.800c.5 4-1 6-2 8l-.5 2H7L5.500 20 1 14q-.8-2 1.500-1.800L5 14V3Z" fill="#fff" stroke="#222" stroke-width="1.200"/><path d="M7.500 9v3M10 9.500v3M13 10v3" stroke="#222"/></svg>
    <button class="outer-close" aria-label="Close"><svg class="i14"><use href="#close"/></svg></button>
  </div>

  <div class="taskbar outer">
    <div class="apps">
      <button aria-label="Start"><svg class="i30"><use href="#windows"/></svg></button>
      <button class="running" aria-label="Edge"><svg class="i30"><use href="#edge"/></svg></button>
      <button class="running" aria-label="Markdown"><svg class="i30" viewBox="0 0 30 30"><circle cx="15" cy="15" r="15" fill="#191a1c"/><path d="M7 21V10l8 6 8-6v11M7 16l8 5 8-5" fill="none" stroke="#23b4d6" stroke-width="2.500"/></svg></button>
      <button class="running current" aria-label="Media player"><svg class="i30" viewBox="0 0 30 30"><circle cx="15" cy="15" r="13.500" fill="#2c2b2d" stroke="url(#gMedia)" stroke-width="2.600"/><path d="m11.500 8.500 10 6.500-10 7Z" fill="#fff"/></svg></button>
      <button class="running" aria-label="Control panel"><svg class="i26" viewBox="0 0 26 26"><rect width="26" height="26" rx="2" fill="#4a9ae6"/><path d="M0 18Q14 16 15 0H2Q0 0 0 2Z" fill="#7fc0f3"/><path d="M13 26q0-12 13-13v11q0 2-2 2Z" fill="#2f72c4"/><path d="M4 9V7l3-2 1 1-1 3ZM18 22l1-3 3-1v3l-2 2Z" fill="#fff"/></svg></button>
      <button class="running" aria-label="Files"><svg class="i30" viewBox="0 0 30 30"><path d="M0 4q0-2 2-2h9l2 3-3 4H0Z" fill="#d79b12"/><path d="M0 8h10l3-3.500h15q2 0 2 2V28H0Z" fill="#fbcb43"/><path d="M5 28v-5q0-3 3-3h13q3 0 3 3v5Z" fill="#1b74c8"/><path d="M10 24h10" stroke="#0d4d92" stroke-width="1.500"/></svg></button>
    </div>
    <div class="tray"><svg class="i16 t-up"><use href="#up"/></svg><span class="ime">英</span><svg class="i20"><use href="#wifi"/></svg><svg class="i20" viewBox="0 0 20 16"><path d="M1 5.500h3L9 1.500v13L4 10.500H1Z" fill="none" stroke="#222" stroke-width="1.300"/><path d="m13 5 6 6m0-6-6 6" stroke="#222" stroke-width="1.300"/></svg><svg class="i20"><use href="#battfull"/></svg><time>16:41<br>2024/1/21</time><span class="badge">9</span></div>
    <span class="watermark">@稀土掘金技术社区</span>
  </div>
</div>
</body>
</html>
```
FILE: styles.css
```css
*{box-sizing:border-box}
body{margin:0;font-family:"Open Sans","Noto Sans CJK SC",sans-serif;font-size:16px;color:#222}
ul{list-style:none;margin:0;padding:0}
a{color:inherit;text-decoration:none}
button{border:0;background:none;padding:0;font:inherit;color:inherit;display:flex;align-items:center;justify-content:center}
input,select{font:inherit}
svg{display:block;flex:none}
i{display:block;flex:none}
.defs{position:absolute;width:0;height:0}
.i12{width:12px;height:12px}
.i14{width:14px;height:14px}
.i16{width:16px;height:16px}
.i18{width:18px;height:18px}
.i20{width:20px;height:20px}
.i22{width:22px;height:22px}
.i26{width:26px;height:26px}
.i28{width:28px;height:28px}
.i30{width:30px;height:30px}
.i66{width:66px;height:66px}

.screen{height:100vh;display:flex;flex-direction:column;overflow:hidden}
.desktop{position:relative;flex:1;min-height:0;background:#000;padding:0 54px 0 53px;display:flex;flex-direction:column}
.browser{flex:1;min-height:0;display:flex;flex-direction:column;background:#f6cba0}

/* Browser chrome */
.tabstrip{height:38px;background:#e8913a;display:flex;align-items:center;padding-left:12px}
.avatar{width:28px;height:28px;margin-right:8px}
.tab{width:285px;height:38px;display:flex;align-items:center;padding:0 11px 0 15px;font-size:14px}
.tab-title{flex:1;margin-left:11px;white-space:nowrap;overflow:hidden}
.tab.active{width:283px;background:#f6cba0;border-radius:8px 8px 0 0;padding-left:12px}
.fade{margin-right:10px;-webkit-mask-image:linear-gradient(90deg,#000 88%,transparent)}
.strip-btn{width:30px;margin-left:6px}
.strip-btn + .strip-btn{margin-left:0}
.wincontrols{margin-left:auto;display:flex;gap:29px;padding-right:18px}
.win-icon{width:24px;height:20px}
.toolbar{height:44px;display:flex;align-items:center;padding-left:7px}
.nav{width:52px;height:40px}
.vline + .nav,.vline + .nav ~ .nav{width:51px}
.vline{width:1px;height:22px;margin:0 2px 0 3px;background:#b48f6d}
.address{flex:1;height:36px;margin:0 9px 0 7px;border-radius:18px;background:#faeddd;display:flex;align-items:center;padding:0 18px 0 20px}
.address input{flex:1;min-width:0;margin:0 2px 0 18px;border:0;padding:0;font-size:16px;color:transparent;background:linear-gradient(90deg,#222 76px,#786e64 76px);-webkit-background-clip:text;background-clip:text}
.star{margin-left:26px}
.speed{font-size:12px;fill:#fff}
.bookmarks{height:41px;display:flex;align-items:center;gap:19px;padding-left:17px;font-size:13px}
.bookmarks a{display:flex;align-items:center;gap:9px;white-space:nowrap}
.bookmarks button{margin-left:auto;margin-right:22px}
.fav{width:20px;height:20px;color:#fff;font-weight:700;font-size:15px;line-height:20px;text-align:center}
.gitee{background:#d3222b;border-radius:50%}
.csdn{background:#fc5531}

/* Application shell */
.app{flex:1;min-height:0;margin:0 5px 4px;display:flex;border-radius:8px;overflow:hidden;background:#fff}
.sidebar{width:302px;background:#001426;color:#adb8bf}
.logo{display:flex;align-items:center;gap:9px;height:80px;padding-left:34px;color:#dcecf4}
.logo-mark{width:76px;height:46px}
.logo-top{display:block;font:12px/12px "Liberation Sans",sans-serif;font-size:11px}
.logo-name{display:block;font:300 31px/30px Lato,sans-serif}
.menu a{display:flex;align-items:center;height:66px;padding:0 24px 0 36px;gap:10px}
.menu li:first-child a{height:70px}
.menu li:nth-child(2) a{height:60px}
.menu .chev{margin-left:auto}
.menu .open{color:#fff}
.menu svg{fill:currentColor}
.submenu{background:#0d2233;padding:0 0 0 71px}
.submenu a{display:flex;align-items:center;height:59px}
.main{flex:1;min-width:0;display:flex;flex-direction:column}
.header{height:59px;border-bottom:1px solid #eee;display:flex;align-items:center;justify-content:space-between;padding:0 21px 0 14px}
.header-right{display:flex;align-items:center}
.version{color:#5476dd;border-right:1px solid #eee;padding-right:19px;line-height:28px}
.gh{margin:0 20px 0 22px}
.gh-btn,.gh-count{height:24px;border:1px solid #d5d5d5;border-radius:3px;font:700 14px/20px "Liberation Sans",sans-serif;display:flex;align-items:center;justify-content:center;gap:4px;background:#fff}
.gh-btn{background:linear-gradient(#fcfcfc,#ebebeb)}
.w64{width:64px}
.w67{width:67px}
.gh-count{width:35px;margin:0 6px}
.toggle{width:59px;height:30px;border-radius:15px;background:#151515;margin-left:5px;justify-content:space-between;padding:0 5px 0 7px}
.knob{width:23px;height:23px;border-radius:50%;background:#fff}
.cell{width:45px;height:30px}
.team{color:#5476dd}
.team-box{margin:0 23px 0 10px;width:130px;height:28px;border:1px solid #d9d9d9;border-radius:3px;display:flex;align-items:center;padding-right:12px}
.team-box select{flex:1;appearance:none;border:0;background:none;padding:0 8px;color:#333}
.user{color:#333}
.content{flex:1;min-height:0;display:flex;font-family:"Liberation Sans",sans-serif}
.editor{flex:1;min-width:0;display:flex;flex-direction:column;background:#fbfbfb}
.outer-scroll{width:8px;background:#f0f0f0}
.outer-scroll i{height:642px;background:#c1c1c1}

/* Flow editor */
.menubar{height:55px;padding:8px 14px;display:flex;gap:19px;line-height:18px;border-bottom:1px solid #ddd}
.tools{height:45px;display:flex;align-items:center;border-bottom:1px solid #ddd}
.tools svg{fill:#666}
.tool-group{height:26px;display:flex;align-items:center;justify-content:center;border-right:1px solid #e8e8e8;gap:7px}
.first{width:54px;padding-right:5px}
.zoomlevel{width:91px;gap:7px;padding-left:2px}
.g73{width:73px;padding-left:5px}
.g71{width:71px;gap:9px;padding-left:4px}
.dim{opacity:.3}
.trash{width:44px;padding-left:8px}
.edges{width:121px;border:0;gap:6px;padding-right:9px}
.caret{border:6px solid transparent;border-top-color:#888;border-bottom:0}
.caret.small{border-width:4px;border-bottom:0;margin-right:5px}
.run-actions{align-self:flex-start;margin:0 5px 0 auto;display:flex;gap:5px}
.run-actions button{width:47px;height:41px;border-radius:5px;background:#2a75de}
.run-actions .play{width:43px}
.run-actions .bug{width:45px}
.run-actions .danger{background:#ee4a50}
.work{flex:1;min-height:0;display:flex}
.palette{width:370px;border-right:1px solid #ddd;font-size:15px}
.search{margin:16px 9px 18px 10px;height:37px;border:1px solid #ccc;border-radius:4px;background:#fff;display:flex;align-items:center;padding-right:5px}
.search input{flex:1;min-width:0;border:0;background:none;padding:0 7px;font-size:14px;outline:0}
.search input::placeholder{color:#909090}
.group-head{height:43px;border:solid #e2e2e2;border-width:1px 0;display:flex;align-items:center;gap:5px;padding-left:2px;font-size:16px}
.caret.tri{border-width:5px;border-top-width:6px;border-bottom:0}
.groups{margin:11px 10px 0 13px;height:372px;display:grid;grid-template-rows:repeat(9,1fr)}
.groups li{border-bottom:1px solid #e2e2e2;display:flex;align-items:center;gap:4px;padding-left:2px}
.tri-right{width:5px;margin:0 2px 0 3px;border:5px solid transparent;border-left-color:#888;border-right-width:0}
.shapes{margin:0 10px 0 13px;height:114px;display:flex;gap:15px;padding:11px 0 0 20px;border-bottom:1px solid #e2e2e2}
.shapes figure{margin:0;width:84px;display:flex;flex-direction:column;align-items:center;gap:6px;font-size:12px;line-height:16px}
.badge-text{font:800 10px Inter,sans-serif;fill:#519f7e}
.badge-text.sm{font-size:8px}
.mongo{font:900 41px Lato,sans-serif;fill:#519f7e}
.splitter{width:14px;border-right:1px solid #ddd;display:flex;align-items:center;justify-content:center;padding-top:8px}
.splitter i{width:4px;height:8px;border:solid #777;border-width:0 1px}
.canvas{position:relative;flex:1;min-width:0;background:#fff;padding:2px 0 10px 59px}
.grid{width:100%;height:100%}
.node{position:absolute;left:154px;top:108px;width:79px;display:flex;flex-direction:column;align-items:center;font-size:14px;line-height:16px;gap:8px}
.node svg{width:79px;height:79px;border:1px dashed #29a5e0}
.dot{position:absolute;left:240px;top:88px;width:12px;height:12px;border-radius:50%;background:#29a8e8;border:1px solid #1583c0}
.hscroll{position:absolute;left:10px;right:10px;bottom:0;height:5px;display:flex;justify-content:space-between}
.hs-arrow{border:solid transparent;border-width:0 0 5px 8px;border-bottom-color:#888}
.hs-thumb{width:364px;border-radius:5px 5px 0 0;background:#8a8a8a}
.collapse{position:absolute;right:0;top:254px;width:24px;height:118px;background:#6b6b6b;border-radius:6px 0 0 6px}
.props{width:373px;display:flex;background:#fafafa;font-size:14px;color:#555;box-shadow:-3px 0 8px #ccc;position:relative}
.props-body{width:356px;background:#f5f5f5;overflow:hidden}
.props-tabs{display:flex}
.props-tabs button{flex:1;height:47px;font-weight:700;color:#555}
.props-tabs .inactive{background:#d9d9d9}
.datasource{height:77px;border-bottom:1px solid #ccc;display:flex;align-items:center;padding:0 12px}
.datasource label{width:117px}
.datasource svg{fill:#222;color:#222}
.datasource select{width:139px;height:40px;margin:0 4px 0 10px;border:1px solid #ccc;border-radius:4px;background:#fff;color:#333}
.datasource button{width:43px;height:37px;border:1px solid #3c7bd6;border-radius:4px;background:#f8f8f8}
.fields{padding:17px 12px;display:flex;flex-direction:column;gap:6px;border-bottom:2px solid #ccc}
.field{display:flex;align-items:center}
.field label{width:96px;white-space:nowrap}
.field svg{fill:#222;color:#222}
.field input{width:200px;height:40px;margin-left:10px;border:1px solid #ccc;border-radius:4px;background:#f5f5f5;padding:0 15px;color:#777}
.field input[type=password]{height:34px;padding:0 9px;font-size:12px}
.req::after{content:"*";color:#e8393f;font-size:13px;margin-left:1px}
.example{font-size:14px;font-weight:400;margin:0 10px 18px;padding:22px 2px 11px;line-height:18px;border-bottom:1px solid #ddd}
.sample{padding:0 12px}
.sample input{width:206px;background:#ececec}
.pscroll{flex:1;display:flex;flex-direction:column;align-items:center;padding-top:11px;gap:8px}
.ps-arrow{border:5px solid transparent;border-bottom:8px solid #888;border-top:0}
.ps-thumb{width:10px;height:402px;border-radius:5px;background:#8a8a8a}

/* Overlays */
.timer{position:absolute;right:153px;bottom:153px;width:60px;height:60px}
.timer text{font-size:15px;fill:#fff}
.cursor{position:absolute;right:219px;top:457px;width:18px;height:24px}
.outer-close{position:absolute;right:22px;top:12px;color:#fff}

/* Taskbars */
.taskbar{position:relative;display:flex;align-items:center;justify-content:center;background:linear-gradient(90deg,#f1e0ec,#f6dfe5 40%,#fae6d8 60%,#f3dce8 78%,#f3deed)}
.inner{height:57px;border-top:1px solid #d0aeb4}
.outer{height:60px;border-top:1px solid #c4a6b0}
.apps{display:flex;gap:7px}
.apps button{position:relative;width:45px;height:45px;border-radius:4px}
.outer .apps button{width:48px;height:48px}
.apps .current{background:#fcefee}
.running::after{content:"";position:absolute;left:50%;bottom:0;width:8px;height:4px;margin-left:-4px;border-radius:2px;background:#8d7f80}
.current::after{width:20px;margin-left:-10px;background:#0a6fc8}
.ij{font:700 9px "Liberation Mono",monospace;fill:#fff}
.tray{position:absolute;right:23px;top:0;height:100%;display:flex;align-items:center;gap:8px;padding-bottom:3px;color:#222}
.outer .tray{right:24px;gap:11px}
.t-up{margin-right:11px}
.ime{font-size:18px;margin-right:12px}
.tray time{width:77px;text-align:right;font-size:14px;line-height:19px}
.badge{width:20px;height:20px;margin-left:4px;border-radius:50%;background:#0a78d4;color:#fff;font-size:13px;line-height:20px;text-align:center}
.watermark{position:absolute;right:8px;bottom:3px;font-size:18px;line-height:26px;color:#777;opacity:.65}
```
